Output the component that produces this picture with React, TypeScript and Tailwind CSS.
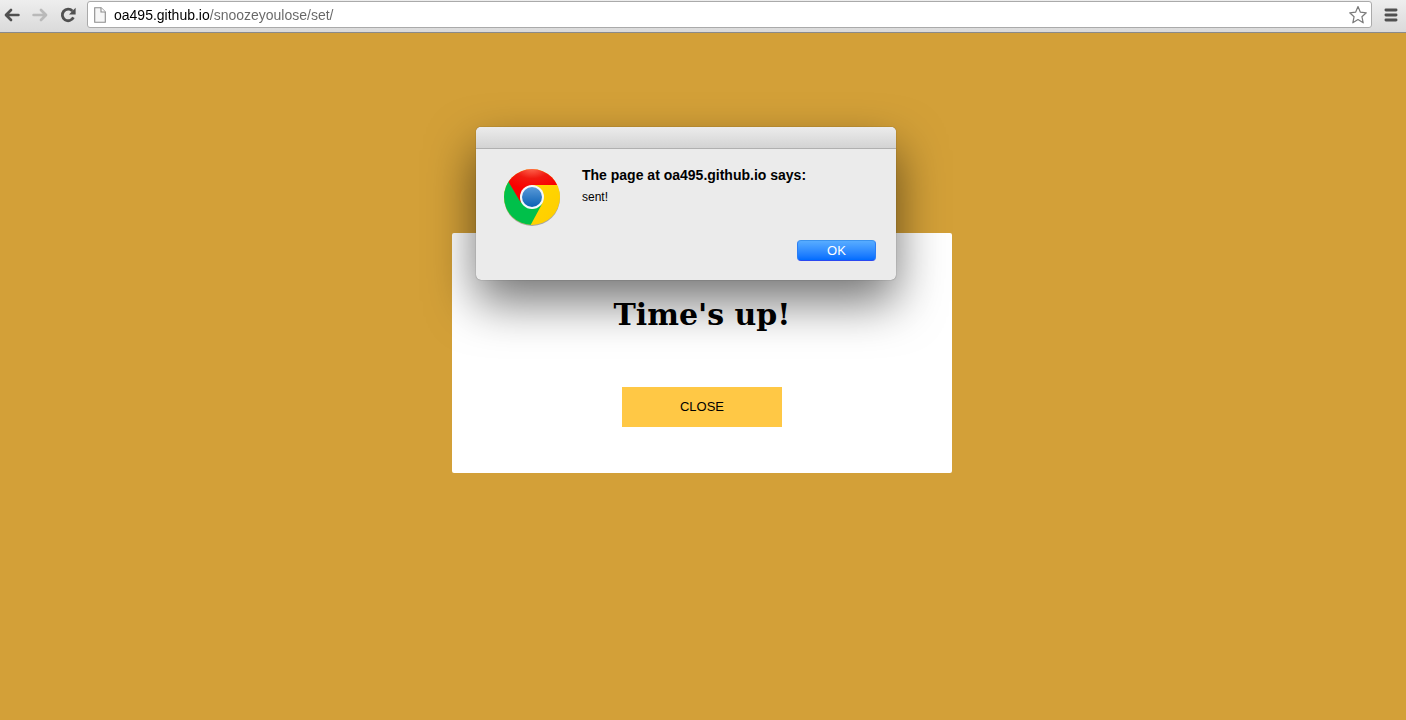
import React, { useState } from 'react';

const ArrowIcon = ({ className }: { className: string }) => (
  <svg viewBox="0 0 16 14" className={className} fill="none" stroke="currentColor" strokeWidth="2.7">
    <path d="M7 2 L2 7 L7 12 M2.4 7 H14.4" strokeLinejoin="round" strokeLinecap="round" />
  </svg>
);

const ReloadIcon = () => (
  <svg viewBox="0 0 16 16" className="h-4 w-4">
    <path d="M12.4 4 A5.8 5.8 0 1 0 13.4 10.4" fill="none" stroke="currentColor" strokeWidth="2.8" />
    <path d="M15.6 0.8 V7.4 H9 Z" fill="currentColor" />
  </svg>
);

const PageIcon = () => (
  <svg viewBox="0 0 12 16" className="h-4 w-3 shrink-0">
    <path d="M0.7 0.7 H7 L11.3 5 V15.3 H0.7 Z" fill="#f6f6f6" stroke="#8c8c8c" strokeWidth="1.1" />
    <path d="M7 0.7 V5 H11.3" fill="#ffffff" stroke="#8c8c8c" strokeWidth="1.1" />
  </svg>
);

const StarIcon = () => (
  <svg viewBox="0 0 20 20" className="h-5 w-5">
    <path
      d="M10 1.6 L12.4 7.2 L18.3 7.8 L13.9 11.7 L15.2 17.8 L10 14.6 L4.8 17.8 L6.1 11.7 L1.7 7.8 L7.6 7.2 Z"
      fill="#ffffff"
      stroke="#7a7a7a"
      strokeWidth="1.2"
      strokeLinejoin="round"
    />
  </svg>
);

const MenuIcon = () => (
  <svg viewBox="0 0 14 14" className="h-[14px] w-[14px]" fill="currentColor">
    <rect x="0.5" y="0.5" width="13" height="3" rx="1.4" />
    <rect x="0.5" y="5.5" width="13" height="3" rx="1.4" />
    <rect x="0.5" y="10.5" width="13" height="3" rx="1.4" />
  </svg>
);

const ChromeLogo = () => (
  <svg viewBox="0 0 58 60" className="h-[60px] w-[58px] shrink-0">
    <defs>
      <radialGradient id="red" cx="0.5" cy="0" r="0.6">
        <stop offset="0" stopColor="#ff6a52" />
        <stop offset="0.5" stopColor="#f01a10" />
        <stop offset="1" stopColor="#fa0000" />
      </radialGradient>
      <linearGradient id="yellow" x1="0" y1="0" x2="1" y2="1">
        <stop offset="0" stopColor="#ffe000" />
        <stop offset="1" stopColor="#ffcc00" />
      </linearGradient>
      <linearGradient id="blue" x1="0" y1="0" x2="0" y2="1">
        <stop offset="0" stopColor="#5a9ad8" />
        <stop offset="1" stopColor="#0a60b4" />
      </linearGradient>
      <clipPath id="disc">
        <circle cx="29" cy="29" r="28" />
      </clipPath>
    </defs>
    <circle cx="29" cy="30" r="28" fill="#000000" opacity="0.3" />
    <g clipPath="url(#disc)">
      <rect width="58" height="58" fill="url(#yellow)" />
      <path d="M0 0 L6 13 L19 35 L29 41 L39 36 L26 60 H0 Z" fill="#00c04a" />
      <path d="M5 13 L0 0 H58 V17 H29 L17 29 L18 35 Z" fill="url(#red)" />
    </g>
    <circle cx="29" cy="29" r="12" fill="#f4f8fc" />
    <circle cx="29" cy="29" r="10" fill="url(#blue)" />
  </svg>
);

const Toolbar = () => {
  const [url, setUrl] = useState('oa495.github.io/snoozeyoulose/set/');

  return (
    <header className="flex h-[33px] items-start border-b border-[#8a8a8a] bg-linear-to-b from-[#eeeeee] to-[#dadada] pr-[6px] pl-1 text-[#505050]">
      <button aria-label="Back" className="flex h-[29px] w-4 items-center">
        <ArrowIcon className="h-[14px] w-4" />
      </button>
      <button aria-label="Forward" className="ml-3 flex h-[29px] w-4 items-center text-[#b9b9b9]">
        <ArrowIcon className="h-[14px] w-4 rotate-180" />
      </button>
      <button aria-label="Reload" className="ml-3 flex h-[29px] w-4 items-center">
        <ReloadIcon />
      </button>
      <div className="mt-px ml-[11px] flex h-[27px] flex-1 items-center rounded-[3px] border border-[#aaaaaa] bg-white pr-[3px] pl-[6px]">
        <PageIcon />
        <input
          aria-label="Address"
          value={url}
          onChange={(e) => setUrl(e.target.value)}
          className="ml-2 h-6 min-w-0 flex-1 bg-linear-to-r from-black from-[95px] to-[#666666] to-[95px] bg-clip-text text-sm text-transparent caret-black outline-none"
        />
        <button aria-label="Bookmark this page">
          <StarIcon />
        </button>
      </div>
      <button aria-label="Menu" className="ml-3 flex h-[29px] w-4 items-center">
        <MenuIcon />
      </button>
    </header>
  );
};

const AlertDialog = () => (
  <div
    role="alertdialog"
    aria-labelledby="alert-title"
    className="absolute -top-[106px] left-6 w-[420px] overflow-hidden rounded-[5px] bg-[#ebebeb] shadow-[0_0_1px_rgba(0,0,0,0.6),0_22px_48px_rgba(0,0,0,0.55)]"
  >
    <div className="h-[22px] border-b border-[#b0b0b0] bg-linear-to-b from-[#ececec] to-[#d3d3d3]"></div>
    <div className="flex gap-[21px] px-[27px] pt-[19px]">
      <ChromeLogo />
      <div>
        <h2 id="alert-title" className="text-sm leading-[14px] font-bold">The page at oa495.github.io says:</h2>
        <p className="mt-2 text-xs leading-[14px]">sent!</p>
      </div>
    </div>
    <div className="flex justify-end px-5 pt-3 pb-[19px]">
      <button className="h-[21px] w-[79px] rounded-[4px] border border-t-[#3b93ee] border-r-[#2a7df5] border-b-[#2a48f0] border-l-[#2a7df5] bg-linear-to-b from-[#57acff] to-[#006cff] text-[13px] leading-[18px] text-white">
        OK
      </button>
    </div>
  </div>
);

const App = () => {
  return (
    <div className="flex min-h-screen flex-col bg-[#d3a038] font-['Liberation_Sans',sans-serif] text-black">
      <Toolbar />
      <main className="flex flex-1 justify-center pt-[200px] pr-[2px]">
        <section className="relative flex h-60 w-[500px] flex-col items-center rounded-[2px] bg-white">
          <AlertDialog />
          <h1 className="relative mt-[62px] font-['DejaVu_Serif',serif] text-3xl leading-10 font-bold">Time's up!</h1>
          <button className="mt-[52px] h-10 w-40 bg-[#ffc845] text-[13px]">CLOSE</button>
        </section>
      </main>
    </div>
  );
};

export default App;
